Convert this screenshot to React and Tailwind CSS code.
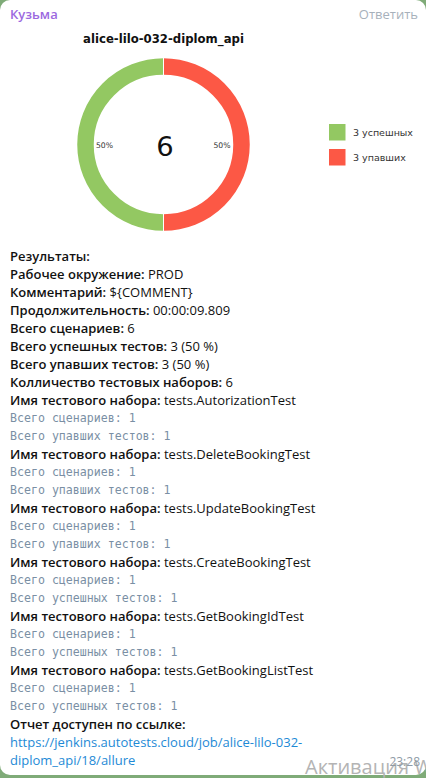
import React from "react";

const suites = [
  { name: "tests.AutorizationTest", stat: "Всего упавших тестов: 1" },
  { name: "tests.DeleteBookingTest", stat: "Всего упавших тестов: 1" },
  { name: "tests.UpdateBookingTest", stat: "Всего упавших тестов: 1" },
  { name: "tests.CreateBookingTest", stat: "Всего успешных тестов: 1" },
  { name: "tests.GetBookingIdTest", stat: "Всего успешных тестов: 1" },
  { name: "tests.GetBookingListTest", stat: "Всего успешных тестов: 1" },
];

const summary = [
  ["Рабочее окружение:", "PROD"],
  ["Комментарий:", "${COMMENT}"],
  ["Продолжительность:", "00:00:09.809"],
  ["Всего сценариев:", "6"],
  ["Всего успешных тестов:", "3 (50 %)"],
  ["Всего упавших тестов:", "3 (50 %)"],
  ["Колличество тестовых наборов:", "6"],
];

function Chart() {
  // donut drawn like the matplotlib picture: two halves, a white seam
  const cx = 163.5;
  const cy = 116.5;
  const r = 78;
  return (
    <svg width="426" height="219" viewBox="0 0 426 219" className="block">
      <text
        x={cx}
        y="15"
        textAnchor="middle"
        fontFamily="DejaVu Sans, sans-serif"
        fontWeight="700"
        fontSize="11.7"
        fill="#111"
      >
        alice-lilo-032-diplom_api
      </text>
      <path
        d={`M ${cx} ${cy - r} A ${r} ${r} 0 0 1 ${cx} ${cy + r}`}
        fill="none"
        stroke="#fc5845"
        strokeWidth="16.5"
      />
      <path
        d={`M ${cx} ${cy + r} A ${r} ${r} 0 0 1 ${cx} ${cy - r}`}
        fill="none"
        stroke="#93c862"
        strokeWidth="16.5"
      />
      <line x1={cx} y1={cy - r - 9} x2={cx} y2={cy - r + 9} stroke="#fff" strokeWidth="1" />
      <line x1={cx} y1={cy + r - 9} x2={cx} y2={cy + r + 9} stroke="#fff" strokeWidth="1" />
      <text x="104.5" y="119.5" textAnchor="middle" fontFamily="DejaVu Sans, sans-serif" fontSize="7.7" fill="#333">
        50%
      </text>
      <text x="222" y="119.5" textAnchor="middle" fontFamily="DejaVu Sans, sans-serif" fontSize="7.7" fill="#333">
        50%
      </text>
      <text x="165" y="128" textAnchor="middle" fontFamily="DejaVu Sans, sans-serif" fontSize="27.4" fill="#111">
        6
      </text>
      <rect x="329" y="96" width="16.5" height="16.5" fill="#93c862" />
      <rect x="329" y="121" width="16.5" height="16.5" fill="#fc5845" />
      <text x="353" y="108" fontFamily="DejaVu Sans, sans-serif" fontSize="9.5" fill="#333">
        3 успешных
      </text>
      <text x="353" y="133" fontFamily="DejaVu Sans, sans-serif" fontSize="9.5" fill="#333">
        3 упавших
      </text>
    </svg>
  );
}

function Mono({ children }) {
  return (
    <div className="font-['DejaVu_Sans_Mono',monospace] text-[11.6px] text-[#7a8fa4] leading-[18px]">
      {children}
    </div>
  );
}

function Row({ label, value }) {
  return (
    <div>
      <span className="font-semibold">{label}</span> {value}
    </div>
  );
}

export default function App() {
  return (
    <div className="relative w-[426px] h-[778px] overflow-hidden bg-[#7fab78]">
      <div className="h-[775px] bg-white rounded-[10px] font-['Open_Sans',sans-serif] text-[13px] leading-[18px] text-[#111]">
        <div className="flex justify-between pl-[10px] pr-[8px] pt-[5px] h-[28px]">
          <span className="font-semibold text-[#9c69df]">Кузьма</span>
          <span className="text-[#a7b1bb]">Ответить</span>
        </div>

        <Chart />

        <div className="px-[10px]">
          <div className="font-semibold">Результаты:</div>
          {summary.map(([label, value]) => (
            <Row key={label} label={label} value={value} />
          ))}
          {suites.map((s) => (
            <div key={s.name}>
              <Row label="Имя тестового набора:" value={s.name} />
              <Mono>Всего сценариев: 1</Mono>
              <Mono>{s.stat}</Mono>
            </div>
          ))}
          <div className="font-semibold">Отчет доступен по ссылке:</div>
          <a className="text-[#1e8ad6]">
            https://jenkins.autotests.cloud/job/alice-lilo-032-
            <br />
            diplom_api/18/allure
          </a>
        </div>
      </div>

      <span className="absolute left-[305px] bottom-[-4px] whitespace-nowrap text-[20px] text-[#b4b4b4] font-['Open_Sans',sans-serif]">
        Активация W
      </span>
      <span className="absolute right-[6px] bottom-[7px] text-[12px] text-[#8f9ba6] font-['Open_Sans',sans-serif]">
        23:28
      </span>
    </div>
  );
}
